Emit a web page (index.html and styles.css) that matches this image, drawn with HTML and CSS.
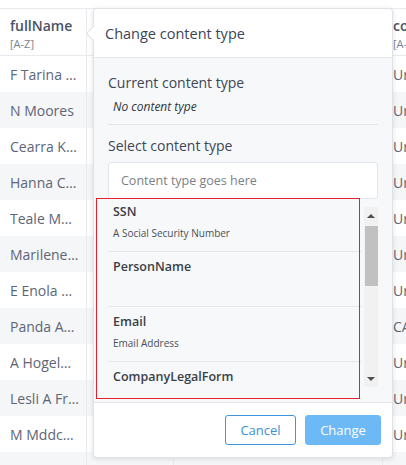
FILE: index.html
```html
<!DOCTYPE html>
<html>
<head>
<meta charset="utf-8">
<link rel="stylesheet" href="styles.css">
</head>
<body>
<div class="page">
  <div class="grid">
    <div class="row head">
      <div class="cell c1"><div class="hname">fullName</div><div class="hsort">[A-Z]</div></div>
      <div class="cell c2"></div>
      <div class="cell c3"></div>
      <div class="cell c4"><div class="hname">co</div><div class="hsort">[A-</div></div>
    </div>
    <div class="row"><div class="cell c1">F Tarina …</div><div class="cell c2"></div><div class="cell c3"></div><div class="cell c4">Ur</div></div>
    <div class="row alt"><div class="cell c1">N Moores</div><div class="cell c2"></div><div class="cell c3"></div><div class="cell c4">Ur</div></div>
    <div class="row"><div class="cell c1">Cearra K…</div><div class="cell c2"></div><div class="cell c3"></div><div class="cell c4">Ur</div></div>
    <div class="row alt"><div class="cell c1">Hanna C…</div><div class="cell c2"></div><div class="cell c3"></div><div class="cell c4">Ur</div></div>
    <div class="row"><div class="cell c1">Teale M…</div><div class="cell c2"></div><div class="cell c3"></div><div class="cell c4">Ur</div></div>
    <div class="row alt"><div class="cell c1">Marilene…</div><div class="cell c2"></div><div class="cell c3"></div><div class="cell c4">Ur</div></div>
    <div class="row"><div class="cell c1">E Enola …</div><div class="cell c2"></div><div class="cell c3"></div><div class="cell c4">Ur</div></div>
    <div class="row alt"><div class="cell c1">Panda A…</div><div class="cell c2"></div><div class="cell c3"></div><div class="cell c4">CA</div></div>
    <div class="row"><div class="cell c1">A Hogel…</div><div class="cell c2"></div><div class="cell c3"></div><div class="cell c4">Ur</div></div>
    <div class="row alt"><div class="cell c1">Lesli A Fr…</div><div class="cell c2"></div><div class="cell c3"></div><div class="cell c4">Ur</div></div>
    <div class="row"><div class="cell c1">M Mddc…</div><div class="cell c2"></div><div class="cell c3"></div><div class="cell c4">Ur</div></div>
    <div class="row alt"><div class="cell c1"></div><div class="cell c2"></div><div class="cell c3"></div><div class="cell c4"></div></div>
  </div>

  <div class="popover">
    <div class="arrow"></div>
    <div class="pop-head">Change content type</div>
    <div class="pop-body">
      <div class="current">
        <div class="label">Current content type</div>
        <div class="value">No content type</div>
      </div>
      <div class="label sel">Select content type</div>
      <div class="input">Content type goes here</div>
      <div class="listwrap">
        <div class="list">
          <div class="items">
            <div class="item"><div class="it-title">SSN</div><div class="it-desc">A Social Security Number</div></div>
            <div class="item"><div class="it-title">PersonName</div><div class="it-desc"></div></div>
            <div class="item"><div class="it-title">Email</div><div class="it-desc">Email Address</div></div>
            <div class="item"><div class="it-title">CompanyLegalForm</div><div class="it-desc"></div></div>
          </div>
        </div>
        <div class="scrollbar">
          <div class="sb-btn"><span class="tri up"></span></div>
          <div class="sb-track"><div class="sb-thumb"></div></div>
          <div class="sb-btn"><span class="tri down"></span></div>
        </div>
      </div>
    </div>
    <div class="pop-foot">
      <button class="btn cancel">Cancel</button>
      <button class="btn primary">Change</button>
    </div>
    <div class="highlight"></div>
  </div>
</div>
</body>
</html>
```

FILE: styles.css
```css
* { box-sizing: border-box; }
html, body { margin: 0; padding: 0; background: #fff; }
body {
  font-family: "Open Sans", "Noto Sans", sans-serif;
  width: 406px;
  height: 465px;
  overflow: hidden;
}
.page { position: relative; padding-top: 8px; }

.grid { border-top: 1px solid #e8eaed; }
.row {
  display: grid;
  grid-template-columns: 87px 87px 209px 1fr;
  height: 36px;
  background: #fff;
}
.row.alt { background: #f5f6f8; }
.row.head { height: 47px; border-bottom: 1px solid #e8eaed; }
.cell {
  border-right: 1px solid #e8eaed;
  padding-left: 10px;
  font-size: 14px;
  color: #5d6576;
  display: flex;
  flex-direction: column;
  justify-content: center;
  white-space: nowrap;
  overflow: hidden;
}
.cell.c4 { border-right: none; }
.hname { font-weight: 600; color: #4a5366; font-size: 14px; line-height: 20px; margin-top: 2px; }
.hsort { font-size: 11px; color: #7a8190; line-height: 15px; }

.popover {
  position: absolute;
  left: 93px;
  top: 8px;
  width: 300px;
  height: 450px;
  background: #fff;
  border: 1px solid #dfe2e6;
  border-radius: 4px;
  box-shadow: 0 1px 5px rgba(0,0,0,0.12);
  display: flex;
  flex-direction: column;
}
.arrow {
  position: absolute;
  left: -6px;
  top: 19px;
  width: 11px;
  height: 11px;
  background: #fff;
  border-left: 1px solid #dfe2e6;
  border-bottom: 1px solid #dfe2e6;
  transform: rotate(45deg);
}
.pop-head {
  height: 49px;
  padding-left: 11px;
  display: flex;
  align-items: center;
  font-size: 14.5px;
  color: #3b4559;
  border-bottom: 1px solid #e6e8eb;
  position: relative;
  background: #fff;
  border-radius: 4px 4px 0 0;
}
.pop-body {
  background: #f7f8fa;
  padding: 15px 14px 15px 14px;
  border-bottom: 1px solid #e6e8eb;
}
.current { border-bottom: 1px solid #e4e6ea; padding-bottom: 8px; }
.label { font-size: 14px; color: #3e4656; line-height: 20px; }
.value { font-size: 12px; font-style: italic; color: #2e3440; padding-left: 5px; line-height: 18px; margin-top: 5px; }
.label.sel { margin-top: 11px; }
.input {
  margin-top: 6px;
  height: 37px;
  background: #fff;
  border: 1px solid #e3e6ea;
  border-radius: 3px;
  padding-left: 12px;
  display: flex;
  align-items: center;
  font-size: 12.5px;
  color: #7b7f86;
}
.listwrap {
  margin-top: 8px;
  height: 180px;
  display: flex;
  gap: 2px;
}
.list { flex: 1; overflow: hidden; }
.items { margin-top: -10px; }
.item {
  height: 55px;
  border-bottom: 1px solid #e6e8eb;
  padding: 5px 5px 0 5px;
}
.it-title { font-size: 12.5px; font-weight: 600; color: #3a3f47; line-height: 20px; }
.it-desc { font-size: 10px; color: #4a4f57; line-height: 14px; margin-top: 4px; }

.scrollbar {
  width: 14px;
  background: #f1f1f1;
  display: flex;
  flex-direction: column;
}
.sb-btn { height: 17px; display: flex; align-items: center; justify-content: center; }
.sb-track { flex: 1; position: relative; }
.sb-thumb { position: absolute; left: 1px; right: 0; top: 2px; height: 60px; background: #c1c1c1; }
.tri { width: 0; height: 0; border-left: 4px solid transparent; border-right: 4px solid transparent; }
.tri.up { border-bottom: 4px solid #505050; }
.tri.down { border-top: 4px solid #505050; }

.pop-foot {
  flex: 1;
  display: flex;
  justify-content: flex-end;
  align-items: center;
  gap: 9px;
  padding-right: 11px;
  padding-bottom: 1px;
  border-radius: 0 0 4px 4px;
}
.btn {
  font-family: "Open Sans", "Noto Sans", sans-serif;
  height: 30px;
  border-radius: 3px;
  font-size: 13px;
  cursor: pointer;
}
.btn.cancel { width: 71px; background: #fff; border: 1px solid #3f95dd; color: #3b8fd8; }
.btn.primary { width: 76px; background: #6db9f5; border: 1px solid #6db9f5; color: #fff; }

.highlight {
  position: absolute;
  left: 2px;
  top: 189px;
  width: 264px;
  height: 201px;
  border: 1px solid #e3222e;
  pointer-events: none;
}
```
